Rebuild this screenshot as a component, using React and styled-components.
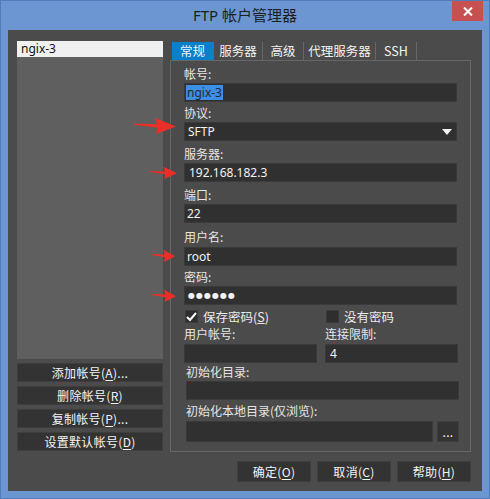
import React from 'react'
import styled, { createGlobalStyle } from 'styled-components'

const GlobalStyle = createGlobalStyle`
  html, body { margin: 0; padding: 0; background: #6b96d1; }
  body { font-family: 'Noto Sans', 'Noto Sans CJK SC', sans-serif; }
  * { box-sizing: border-box; }
`

const Window = styled.div`
  position: relative;
  width: 490px;
  height: 499px;
  background: #6b96d1;
  border: 1px solid #4f7cba;
  display: flex;
  flex-direction: column;
`

const TitleBar = styled.div`
  height: 29px;
  display: grid;
  grid-template-columns: 1fr auto 1fr;
  align-items: start;
`

const Title = styled.div`
  grid-column: 2;
  line-height: 28px;
  font-size: 15px;
  color: #1e1e1e;
  font-family: 'Noto Sans', 'Noto Sans CJK SC', sans-serif;
`

const CloseButton = styled.div`
  grid-column: 3;
  justify-self: end;
  margin-right: 6px;
  width: 31px;
  height: 20px;
  background: #c75050;
  display: flex;
  align-items: center;
  justify-content: center;
`

const Body = styled.div`
  flex: 1;
  margin: 0 7px 7px 7px;
  background: #4b4b4b;
  padding: 11px 11px 9px 9px;
  display: flex;
  flex-direction: column;
`

const Main = styled.div`
  display: flex;
  gap: 7px;
  height: 411px;
`

const LeftColumn = styled.div`
  width: 146px;
  display: flex;
  flex-direction: column;
  gap: 4px;
  padding-bottom: 1px;
`

const AccountList = styled.div`
  flex: 1;
  background: #5f5f5f;
`

const ListItem = styled.div`
  height: 16px;
  line-height: 16px;
  padding-left: 4px;
  font-size: 12px;
  color: #111;
  background: ${p => (p.$selected ? '#f0f0f0' : 'transparent')};
`

const Button = styled.div`
  height: ${p => p.$h || 19}px;
  width: ${p => (p.$w ? p.$w + 'px' : 'auto')};
  background: #333333;
  border: 1px solid #3e3e3e;
  color: #f4f4f4;
  font-size: 12px;
  line-height: 15px;
  letter-spacing: 0.3px;
  font-family: 'Noto Sans CJK SC', 'Noto Sans', sans-serif;
  display: flex;
  align-items: center;
  justify-content: center;
  flex-shrink: 0;
  u { text-underline-offset: 2px; }
`

const RightColumn = styled.div`
  width: 301px;
  display: flex;
  flex-direction: column;
`

const TabRow = styled.div`
  display: flex;
  margin: 1px 0 0 2px;
  height: 18px;
`

const Tab = styled.div`
  width: ${p => p.$w}px;
  height: 18px;
  display: flex;
  align-items: center;
  justify-content: center;
  font-size: 12.5px;
  line-height: 16px;
  font-family: 'Noto Sans CJK SC', sans-serif;
  color: #f4f4f4;
  background: ${p => (p.$active ? '#0a7fca' : 'transparent')};
  border-right: 1px solid ${p => (p.$active ? '#0a7fca' : '#676767')};
`

const Panel = styled.div`
  flex: 1;
  border: 1px solid #676767;
  padding: 5px 13px 0 13px;
  display: flex;
  flex-direction: column;
`

const Label = styled.div`
  height: ${p => p.$h}px;
  display: flex;
  align-items: flex-end;
  padding-bottom: ${p => p.$pb ?? 1}px;
  line-height: 16px;
  font-size: 12px;
  font-family: 'Noto Sans CJK SC', sans-serif;
  color: #e6e6e6;
  white-space: nowrap;
`

const Field = styled.div`
  height: ${p => p.$h || 19}px;
  flex: ${p => (p.$grow ? 1 : 'none')};
  background: #303030;
  border: 1px solid #3a3a3a;
  color: #f2f2f2;
  font-size: 12px;
  line-height: 15px;
  padding: 0 ${p => p.$pad ?? 2}px;
  display: flex;
  align-items: center;
  justify-content: space-between;
`

const Selected = styled.span`
  background: #3b8fe6;
  color: #262626;
  padding: 0 1px;
  margin-left: -1px;
  line-height: 15px;
`

const Dots = styled.span`
  font-size: 8px;
  line-height: 10px;
  letter-spacing: 1px;
  font-family: 'DejaVu Sans', sans-serif;
`

const CheckRow = styled.div`
  margin-top: 4px;
  height: 15px;
  display: grid;
  grid-template-columns: 1fr 1fr;
  align-items: center;
  padding-left: 1px;
`

const CheckItem = styled.div`
  display: flex;
  align-items: center;
  gap: 5px;
  padding-left: ${p => p.$indent || 0}px;
  font-size: 12.5px;
  line-height: 14px;
  font-family: 'Noto Sans CJK SC', sans-serif;
  color: #ececec;
  u { text-underline-offset: 1px; }
`

const Box = styled.div`
  width: 13px;
  height: 13px;
  background: #2e2e2e;
  border: 1px solid #3a3a3a;
  display: flex;
  align-items: center;
  justify-content: center;
`

const TwoCols = styled.div`
  display: grid;
  grid-template-columns: 133px 133px;
  column-gap: 8px;
`

const Column = styled.div`
  display: flex;
  flex-direction: column;
`

const Lower = styled.div`
  display: flex;
  flex-direction: column;
  margin: 0 -2px 0 2px;
`

const BrowseRow = styled.div`
  display: flex;
  gap: 4px;
`

const Footer = styled.div`
  margin-top: 9px;
  display: flex;
  justify-content: flex-end;
  gap: 6px;
`

const ArrowMark = styled.svg`
  position: absolute;
  overflow: visible;
`

const RedArrow = ({ x, y, w, h }) => (
  <ArrowMark
    style={{ left: x - 1, top: y - 1 }}
    width={w}
    height={h}
    viewBox="0 0 40 16"
    preserveAspectRatio="none"
  >
    <path d="M0 6.2 L22 6.8 L20 1 L40 9 L21 16 L22.5 10 L0 7.4 Z" fill="#ec2f26" />
  </ArrowMark>
)

const tabs = [
  { t: '常规', w: 42, active: true },
  { t: '服务器', w: 49 },
  { t: '高级', w: 41 },
  { t: '代理服务器', w: 72 },
  { t: 'SSH', w: 41 },
]

export default function App() {
  return (
    <>
      <GlobalStyle />
      <Window>
        <TitleBar>
          <Title>FTP 帐户管理器</Title>
          <CloseButton>
            <svg width="10" height="9" viewBox="0 0 10 9">
              <path d="M1 0.5 L9 8.5 M9 0.5 L1 8.5" stroke="#fff" strokeWidth="2" />
            </svg>
          </CloseButton>
        </TitleBar>
        <Body>
          <Main>
            <LeftColumn>
              <AccountList>
                <ListItem $selected>ngix-3</ListItem>
              </AccountList>
              <Button>添加帐号(<u>A</u>)...</Button>
              <Button>删除帐号(<u>R</u>)</Button>
              <Button>复制帐号(<u>P</u>)...</Button>
              <Button>设置默认帐号(<u>D</u>)</Button>
            </LeftColumn>
            <RightColumn>
              <TabRow>
                {tabs.map(tab => (
                  <Tab key={tab.t} $w={tab.w} $active={tab.active}>{tab.t}</Tab>
                ))}
              </TabRow>
              <Panel>
                <Label $h={17}>帐号:</Label>
                <Field><Selected>ngix-3</Selected></Field>
                <Label $h={20}>协议:</Label>
                <Field $pad={3}>
                  <span>SFTP</span>
                  <svg width="10" height="6" viewBox="0 0 10 6" style={{ marginRight: 1 }}>
                    <path d="M0 0 H10 L5 6 Z" fill="#f2f2f2" />
                  </svg>
                </Field>
                <Label $h={22}>服务器:</Label>
                <Field $pad={4}>192.168.182.3</Field>
                <Label $h={22}>端口:</Label>
                <Field>22</Field>
                <Label $h={24} $pb={2}>用户名:</Label>
                <Field $pad={2}>root</Field>
                <Label $h={20}>密码:</Label>
                <Field $pad={3}><Dots>●●●●●●</Dots></Field>
                <CheckRow>
                  <CheckItem>
                    <Box>
                      <svg width="11" height="10" viewBox="0 0 11 10">
                        <path d="M1 5 L4 8 L10 1" stroke="#fff" strokeWidth="2" fill="none" />
                      </svg>
                    </Box>
                    <span>保存密码(<u>S</u>)</span>
                  </CheckItem>
                  <CheckItem $indent={5}>
                    <Box />
                    <span>没有密码</span>
                  </CheckItem>
                </CheckRow>
                <TwoCols>
                  <Column>
                    <Label $h={20} $pb={2}>用户帐号:</Label>
                    <Field />
                  </Column>
                  <Column>
                    <Label $h={20} $pb={2}>连接限制:</Label>
                    <Field $pad={4}>4</Field>
                  </Column>
                </TwoCols>
                <Lower>
                  <Label $h={18}>初始化目录:</Label>
                  <Field />
                  <Label $h={21} $pb={2}>初始化本地目录(仅浏览):</Label>
                  <BrowseRow>
                    <Field $h={21} $grow />
                    <Button $h={21} $w={22}>...</Button>
                  </BrowseRow>
                </Lower>
              </Panel>
            </RightColumn>
          </Main>
          <Footer>
            <Button $h={21} $w={74}>确定(<u>O</u>)</Button>
            <Button $h={21} $w={74}>取消(<u>C</u>)</Button>
            <Button $h={21} $w={74}>帮助(<u>H</u>)</Button>
          </Footer>
        </Body>
        <RedArrow x={134} y={117} w={42} h={17} />
        <RedArrow x={150} y={166} w={27} h={13} />
        <RedArrow x={152} y={249} w={23} h={13} />
        <RedArrow x={152} y={289} w={24} h={13} />
      </Window>
    </>
  )
}
